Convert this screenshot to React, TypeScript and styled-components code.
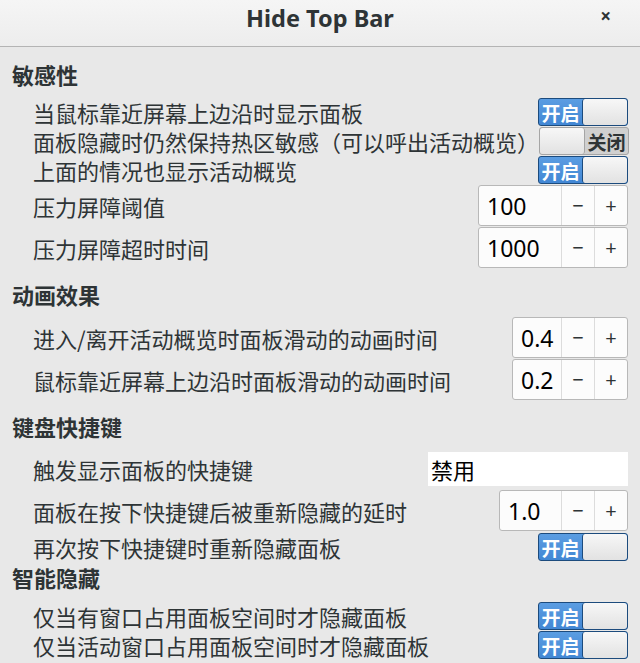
import React from "react";
import styled, { createGlobalStyle } from "styled-components";

const Global = createGlobalStyle`
  html, body { margin: 0; padding: 0; background: #e8e8e8; }
  body { font-family: "Noto Sans", "Noto Sans CJK SC", sans-serif; color: #2e3436; }
  * { box-sizing: border-box; }
`;

const Window = styled.div`
  width: 640px;
  height: 663px;
  background: #e8e8e8;
  display: flex;
  flex-direction: column;
  overflow: hidden;
`;

const TitleBar = styled.div`
  height: 47px;
  flex: none;
  display: flex;
  align-items: center;
  justify-content: center;
  position: relative;
  background: linear-gradient(#f5f5f5, #ededed);
  border-bottom: 1px solid #b4b4b4;
  padding-bottom: 11px;
`;

const Title = styled.div`
  font-family: "Noto Sans", "Noto Sans CJK SC", sans-serif;
  font-weight: 700;
  font-size: 23.5px;
  color: #2e3436;
`;

const Close = styled.div`
  position: absolute;
  right: 29px;
  top: 3px;
  font-size: 19px;
  font-weight: 700;
  color: #2e3436;
`;

const Content = styled.div`
  padding: 13px 12px 0 12px;
  display: flex;
  flex-direction: column;
`;

const SectionHeader = styled.div<{ $mt: number; $mb: number }>`
  font-family: "Noto Sans CJK SC", sans-serif;
  font-weight: 700;
  font-size: 22px;
  line-height: 28px;
  height: 28px;
  color: #2e3436;
  margin-top: ${(p) => p.$mt}px;
  margin-bottom: ${(p) => p.$mb}px;
`;

const Rows = styled.div`
  display: flex;
  flex-direction: column;
  gap: 1px;
`;

const Row = styled.div<{ $h: number; $mt?: number }>`
  height: ${(p) => p.$h}px;
  margin-top: ${(p) => p.$mt ?? 0}px;
  display: flex;
  align-items: center;
  justify-content: space-between;
  padding-left: 21px;
`;

const Label = styled.div`
  font-family: "Noto Sans CJK SC", sans-serif;
  font-size: 22px;
  color: #2e3436;
  white-space: nowrap;
`;

const SwitchBox = styled.div<{ $on: boolean }>`
  width: 90px;
  height: 28px;
  flex: none;
  display: flex;
  flex-direction: ${(p) => (p.$on ? "row" : "row-reverse")};
  border: 1px solid ${(p) => (p.$on ? "#1c4b7d" : "#a5a5a5")};
  border-radius: 3px;
  overflow: hidden;
  background: ${(p) => (p.$on ? "linear-gradient(#5b9de2, #4287d4)" : "#d0d0d0")};
`;

const SwitchText = styled.div<{ $on: boolean }>`
  flex: 1;
  display: flex;
  align-items: center;
  justify-content: center;
  font-family: "Noto Sans CJK SC", sans-serif;
  font-size: 19px;
  font-weight: 700;
  color: ${(p) => (p.$on ? "#ffffff" : "#2e3436")};
`;

const Knob = styled.div<{ $on: boolean }>`
  width: 45px;
  flex: none;
  background: linear-gradient(#f7f7f7, #e2e2e2);
  border-radius: 3px;
  ${(p) => (p.$on ? "border-left: 1px solid #1c4b7d;" : "border-right: 1px solid #a5a5a5;")}
`;

const Switch = ({ on }: { on: boolean }) => (
  <SwitchBox $on={on}>
    <SwitchText $on={on}>{on ? "开启" : "关闭"}</SwitchText>
    <Knob $on={on} />
  </SwitchBox>
);

const SpinBox = styled.div<{ $w: number }>`
  width: ${(p) => p.$w}px;
  height: 41px;
  flex: none;
  display: flex;
  background: #fcfcfc;
  border: 1px solid #b8b8b8;
  border-radius: 3px;
`;

const SpinValue = styled.div`
  flex: 1;
  display: flex;
  align-items: center;
  padding-left: 8px;
  font-family: "Noto Sans", sans-serif;
  font-size: 23px;
  color: #000;
`;

const SpinButton = styled.div`
  width: 33px;
  flex: none;
  display: flex;
  align-items: center;
  justify-content: center;
  border-left: 1px solid #dcdcdc;
  font-family: "Noto Sans", sans-serif;
  font-size: 20px;
  color: #2e3436;
`;

const Spin = ({ value, width }: { value: string; width: number }) => (
  <SpinBox $w={width}>
    <SpinValue>{value}</SpinValue>
    <SpinButton>−</SpinButton>
    <SpinButton>+</SpinButton>
  </SpinBox>
);

const Entry = styled.div`
  width: 200px;
  height: 34px;
  flex: none;
  background: #ffffff;
  display: flex;
  align-items: center;
  padding-left: 3px;
  font-family: "Noto Sans CJK SC", sans-serif;
  font-size: 22px;
  color: #000;
`;

export default function App() {
  return (
    <>
      <Global />
      <Window>
        <TitleBar>
          <Title>Hide Top Bar</Title>
          <Close>×</Close>
        </TitleBar>
        <Content>
          <SectionHeader $mt={0} $mb={10}>敏感性</SectionHeader>
          <Rows>
            <Row $h={28}>
              <Label>当鼠标靠近屏幕上边沿时显示面板</Label>
              <Switch on />
            </Row>
            <Row $h={28}>
              <Label>面板隐藏时仍然保持热区敏感（可以呼出活动概览）</Label>
              <Switch on={false} />
            </Row>
            <Row $h={28}>
              <Label>上面的情况也显示活动概览</Label>
              <Switch on />
            </Row>
            <Row $h={41}>
              <Label>压力屏障阈值</Label>
              <Spin value="100" width={150} />
            </Row>
            <Row $h={41}>
              <Label>压力屏障超时时间</Label>
              <Spin value="1000" width={150} />
            </Row>
          </Rows>

          <SectionHeader $mt={12} $mb={9}>动画效果</SectionHeader>
          <Rows>
            <Row $h={41}>
              <Label>进入/离开活动概览时面板滑动的动画时间</Label>
              <Spin value="0.4" width={116} />
            </Row>
            <Row $h={41}>
              <Label>鼠标靠近屏幕上边沿时面板滑动的动画时间</Label>
              <Spin value="0.2" width={116} />
            </Row>
          </Rows>

          <SectionHeader $mt={12} $mb={11}>键盘快捷键</SectionHeader>
          <Rows>
            <Row $h={35}>
              <Label>触发显示面板的快捷键</Label>
              <Entry>禁用</Entry>
            </Row>
            <Row $h={41} $mt={3}>
              <Label>面板在按下快捷键后被重新隐藏的延时</Label>
              <Spin value="1.0" width={129} />
            </Row>
            <Row $h={28} $mt={1}>
              <Label>再次按下快捷键时重新隐藏面板</Label>
              <Switch on />
            </Row>
          </Rows>

          <SectionHeader $mt={2} $mb={11}>智能隐藏</SectionHeader>
          <Rows>
            <Row $h={28}>
              <Label>仅当有窗口占用面板空间时才隐藏面板</Label>
              <Switch on />
            </Row>
            <Row $h={28}>
              <Label>仅当活动窗口占用面板空间时才隐藏面板</Label>
              <Switch on />
            </Row>
          </Rows>
        </Content>
      </Window>
    </>
  );
}
